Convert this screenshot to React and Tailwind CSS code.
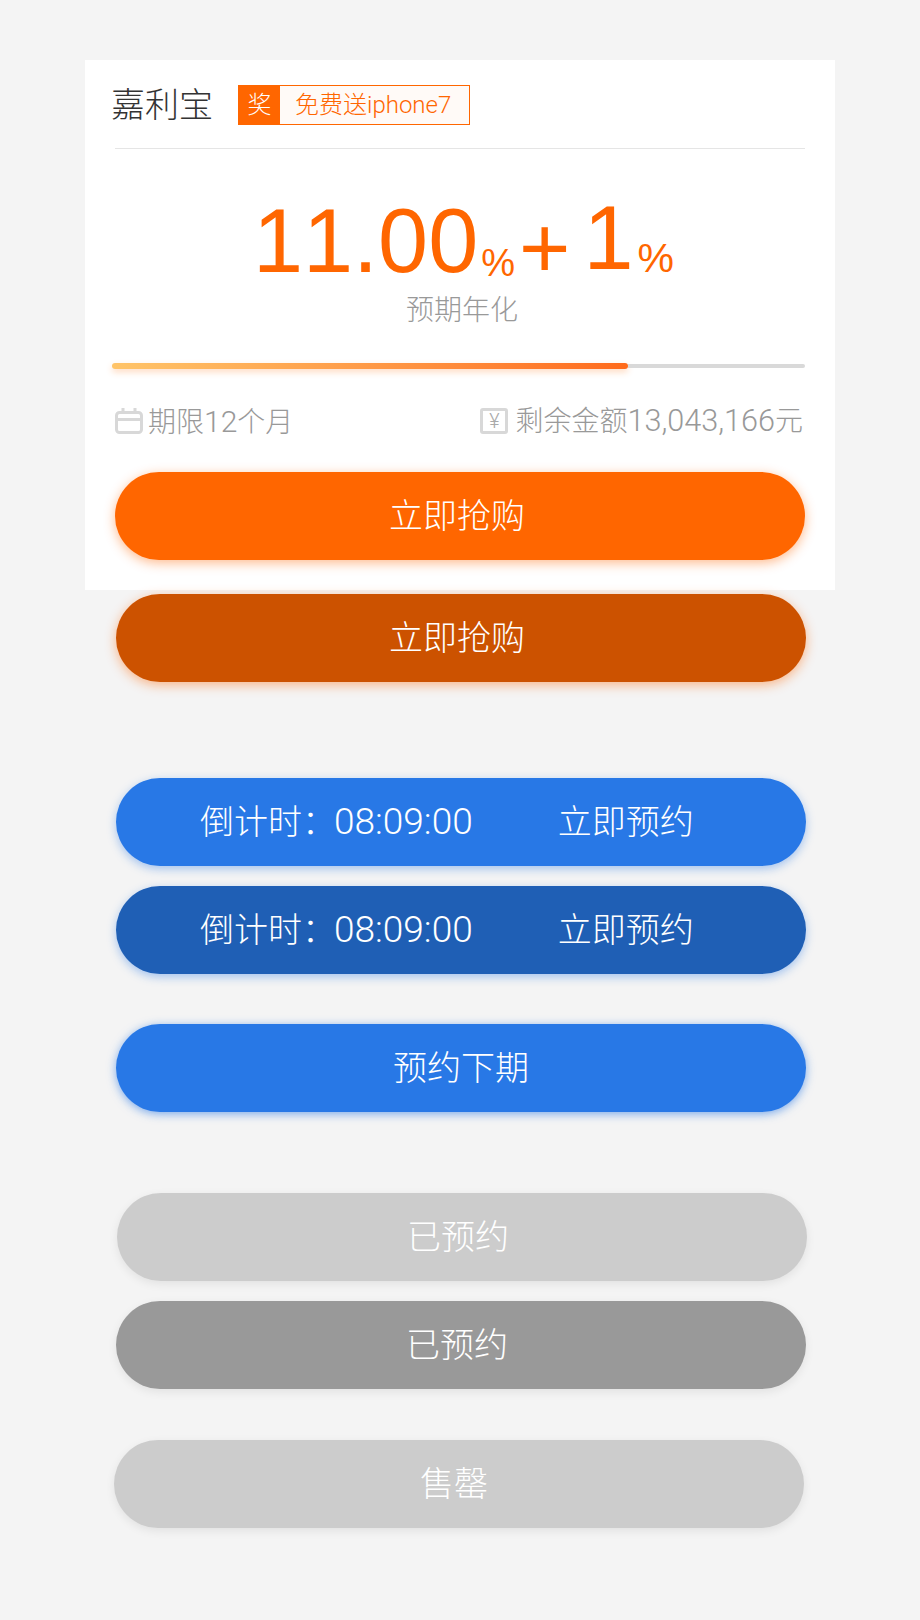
const cjk = { fontFamily: 'Roboto, "Noto Sans CJK SC", sans-serif' };
const big = { fontFamily: '"Liberation Sans", sans-serif' };

const PillButton = ({ className, children }) => (
  <div className={`flex h-[88px] w-[690px] items-center justify-center rounded-[44px] text-[34px] font-extralight text-white ${className}`}>
    {children}
  </div>
);

const Countdown = ({ className }) => (
  <PillButton className={`ml-[116px] !justify-start pl-[84px] ${className}`}>
    <span>倒计时：</span>
    <span className="ml-[-2px] text-[37px] font-light">08:09:00</span>
    <span className="ml-[85px]">立即预约</span>
  </PillButton>
);

const CalendarIcon = () => (
  <svg width="28" height="26" viewBox="0 0 28 26" fill="none" stroke="#d8d8d8" strokeWidth="3">
    <rect x="1.5" y="4.5" width="25" height="20" rx="3" />
    <path d="M1.5 11.5h25M8 0v6M20 0v6" />
  </svg>
);

const YenIcon = () => (
  <div className="flex h-[26px] w-[28px] items-center justify-center rounded-[3px] border-[3px] border-[#d8d8d8] text-[20px] font-light leading-none text-[#aaa]">
    ¥
  </div>
);

export default function App() {
  return (
    <div className="h-[1620px] w-[920px] overflow-hidden bg-[#f4f4f4] pt-[60px]" style={cjk}>
      <div className="ml-[85px] h-[530px] w-[750px] bg-white px-[30px]">
        {/* header */}
        <div className="flex h-[89px] items-center border-b border-[#e5e5e5] pt-[1px]">
          <span className="ml-[-4px] text-[34px] font-extralight leading-none text-[#333]">嘉利宝</span>
          <div className="ml-[25px] flex h-[40px] w-[232px] border border-[#ff6600] bg-[#fffaf7] text-[24px] font-extralight text-[#ff6600]">
            <span className="flex w-[41px] items-center justify-center bg-[#ff6600] text-white">奖</span>
            <span className="ml-[15px] flex items-center whitespace-nowrap">
              免费送<span className="font-light">iphone7</span>
            </span>
          </div>
        </div>

        {/* rate */}
        <div className="ml-[138px] mt-[39px] flex h-[98px] items-end leading-none text-[#ff6600] [font-kerning:none]" style={big}>
          <span className="text-[90px]">11.00</span>
          <span className="mb-[4px] ml-[3px] text-[38px]">%</span>
          <span className="mb-[-6px] ml-[4px] text-[88px]">+</span>
          <span className="mb-[3px] ml-[13px] text-[90px]">1</span>
          <span className="mb-[7px] ml-[4px] text-[41px]">%</span>
        </div>
        <p className="mt-[11px] ml-[4px] text-center text-[28px] font-extralight leading-none text-[#999]">预期年化</p>

        {/* progress */}
        <div className="ml-[-3px] mt-[38px] flex h-[6px] w-[693px] items-center">
          <div className="h-[6px] w-[516px] rounded-[3px] bg-gradient-to-r from-[#ffc468] to-[#ff6a1a] shadow-[0_3px_6px_rgba(255,130,40,0.3)]" />
          <div className="h-[4px] flex-1 rounded-r-[2px] bg-[#d9d9d9]" />
        </div>

        {/* info */}
        <div className="mt-[39px] flex h-[26px] items-center justify-between pr-[2px] text-[28px] font-extralight text-[#999]">
          <div className="flex items-center gap-[5px]">
            <CalendarIcon />
            <span>
              期限<span className="text-[30px] font-light">12</span>个月
            </span>
          </div>
          <div className="flex items-center gap-[7px]">
            <YenIcon />
            <span>
              剩余金额<span className="text-[30.6px] font-light">13,043,166</span>元
            </span>
          </div>
        </div>

        <PillButton className="mt-[38px] bg-[#ff6600] pr-[6px] shadow-[0_3px_12px_rgba(255,102,0,0.45)]">立即抢购</PillButton>
      </div>

      <PillButton className="ml-[116px] mt-[4px] bg-[#cc5200] pr-[8px] shadow-[0_3px_12px_rgba(255,102,0,0.45)]">立即抢购</PillButton>

      <Countdown className="mt-[96px] bg-[#2878e6] shadow-[0_3px_10px_rgba(40,120,230,0.4)]" />
      <Countdown className="mt-[20px] bg-[#1f5fb5] shadow-[0_3px_10px_rgba(40,120,230,0.4)]" />
      <PillButton className="ml-[116px] mt-[50px] bg-[#2878e6] shadow-[0_2px_10px_rgba(40,120,230,0.6)]">预约下期</PillButton>

      <PillButton className="ml-[117px] mt-[81px] bg-[#cccccc] pr-[8px] shadow-[0_3px_10px_rgba(0,0,0,0.08)]">已预约</PillButton>
      <PillButton className="ml-[116px] mt-[20px] bg-[#999999] pr-[8px] shadow-[0_3px_10px_rgba(0,0,0,0.08)]">已预约</PillButton>
      <PillButton className="ml-[114px] mt-[51px] bg-[#cccccc] pr-[10px] shadow-[0_3px_10px_rgba(0,0,0,0.08)]">售罄</PillButton>
    </div>
  );
}
